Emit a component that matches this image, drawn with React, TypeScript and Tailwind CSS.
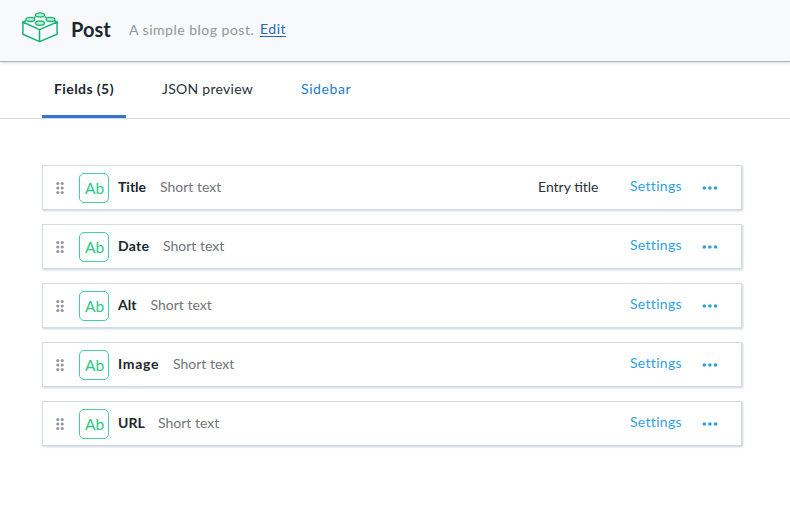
type Field = { name: string; nameClass: string; entryTitle?: boolean };

const fields: Field[] = [
  { name: "Title", nameClass: "w-[28px]", entryTitle: true },
  { name: "Date", nameClass: "w-[31px] tracking-[0.25px]" },
  { name: "Alt", nameClass: "w-[18.5px]" },
  { name: "Image", nameClass: "w-[41px] tracking-[0.7px]" },
  { name: "URL", nameClass: "w-[26px]" },
];

function BrickLogo() {
  return (
    <svg width="38" height="32" viewBox="0 0 38 32" fill="none" stroke="#19b377" strokeWidth="1.5" strokeLinejoin="round" className="shrink-0">
      <path d="M4.8 9.8 1.9 11v12.3l16.6 7.3 17.6-7.3V11l-2.7-1.2M1.9 11l16.6 7.6L36.1 11M18.5 18.6v12M12.6 6.8l2-.9M25.6 6.8l-2-.9" />
      <g fill="#b6eccd" strokeWidth="1.3">
        <ellipse cx="19" cy="4" rx="4.4" ry="2.1" />
        <ellipse cx="9.3" cy="8.4" rx="4.4" ry="2.1" />
        <ellipse cx="29.5" cy="8.4" rx="4.4" ry="2.1" />
        <ellipse cx="19" cy="12.1" rx="4.5" ry="2.3" />
      </g>
    </svg>
  );
}

function DragHandle() {
  return (
    <svg width="10" height="14" viewBox="0 0 10 14" fill="#9298a2" className="mt-px shrink-0">
      {[2.5, 7, 11.5].map((y) => (
        <g key={y}>
          <circle cx="2.8" cy={y} r="1.6" />
          <circle cx="7.2" cy={y} r="1.6" />
        </g>
      ))}
    </svg>
  );
}

function FieldRow({ field }: { field: Field }) {
  return (
    <li className="flex h-[45px] items-center border border-[#d3dce6] bg-white pl-3 pr-[23px] shadow-[1px_1px_2px_rgba(100,120,160,0.35)]">
      <DragHandle />
      <span className="ml-[14px] mt-px flex size-[30px] shrink-0 items-center justify-center rounded-[5px] border border-[#41d399] pl-px pt-px text-[15.5px] leading-none text-[#2ac887]">
        Ab
      </span>
      <span className={`-mt-[2px] ml-[9px] whitespace-nowrap text-[14px] font-bold leading-5 text-[#20262d] ${field.nameClass}`}>{field.name}</span>
      <span className="-mt-[2px] ml-[14px] whitespace-nowrap text-[14px] leading-5 text-[#727579]">Short text</span>
      <span className="ml-auto flex items-center whitespace-nowrap text-[14px] leading-5">
        {field.entryTitle && <span className="-mt-[2px] w-[92px] text-[#2a3039]">Entry title</span>}
        <a className="-mt-1 w-[72px] tracking-[0.3px] text-[#2f9fe4]">Settings</a>
        <svg width="16" height="6" viewBox="0 0 16 6" fill="#2f9fe4" className="mt-px">
          <circle cx="2.3" cy="3" r="1.8" />
          <circle cx="7.9" cy="3" r="1.8" />
          <circle cx="13.5" cy="3" r="1.8" />
        </svg>
      </span>
    </li>
  );
}

export default function App() {
  return (
    <div className="h-[508px] w-[790px] overflow-hidden bg-white font-['Lato',sans-serif]">
      <header className="flex h-[62px] items-start border-b border-[#aab6c4] bg-[#f7f9fa] pl-[21px] pt-[11px] shadow-[0_1px_3px_rgba(0,0,0,0.14)]">
        <BrickLogo />
        <h1 className="ml-3 mt-[4px] w-[58px] text-[20px] font-bold leading-7 text-[#20262f]">Post</h1>
        <p className="mt-[9px] w-[131px] whitespace-nowrap text-[14px] leading-5 tracking-[0.5px] text-[#949698]">A simple blog post.</p>
        <a className="mt-[8px] text-[14px] leading-5 tracking-[0.5px] text-[#2a67bb] underline underline-offset-2">Edit</a>
      </header>
      <nav className="flex h-[57px] gap-6 border-b border-[#d1d7e2] pl-[42px] text-[14px] leading-[54px] text-[#2a3039]">
        <a className="w-[84px] whitespace-nowrap border-b-3 border-[#3574c8] pl-3 font-bold tracking-[0.42px] text-[#20262f]">Fields (5)</a>
        <a className="w-[115px] whitespace-nowrap pl-3 tracking-[0.27px]">JSON preview</a>
        <a className="whitespace-nowrap pl-3 tracking-[0.6px] text-[#1b7ccb]">Sidebar</a>
      </nav>
      <ul className="ml-[42px] mt-[46px] flex w-[700px] flex-col gap-[14px]">
        {fields.map((f) => (
          <FieldRow key={f.name} field={f} />
        ))}
      </ul>
    </div>
  );
}
